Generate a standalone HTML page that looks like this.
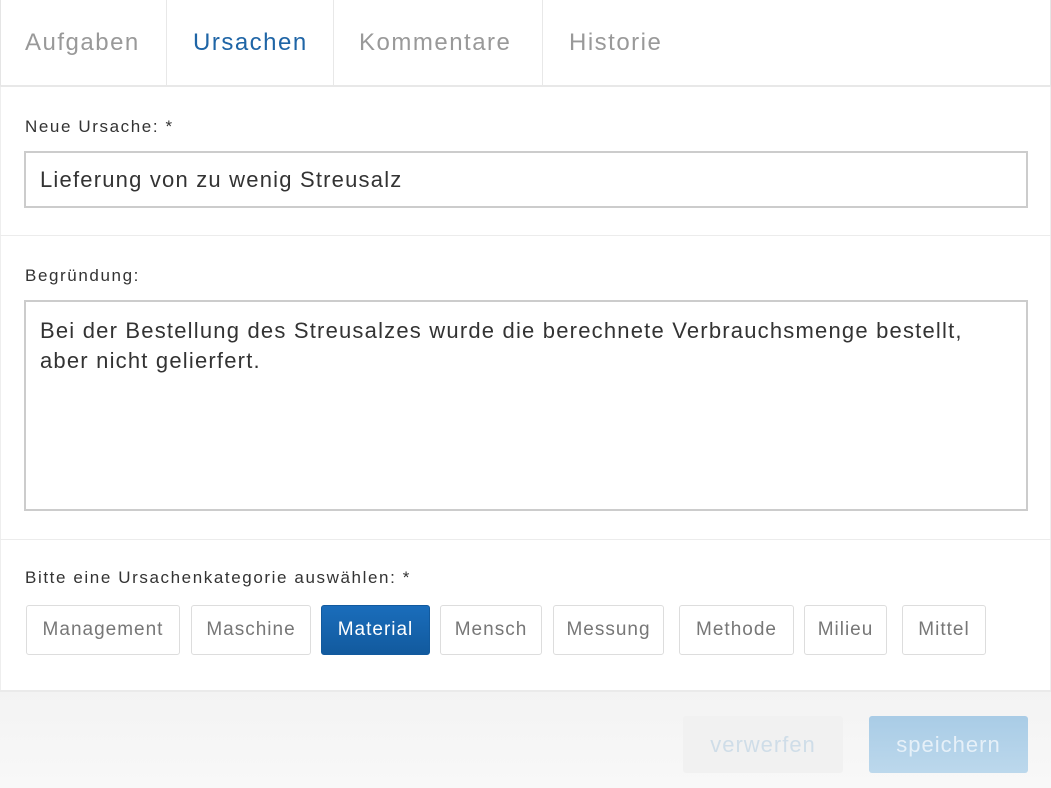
<!DOCTYPE html>
<html><head><meta charset="utf-8"><style>
*{box-sizing:border-box;margin:0;padding:0}
body{width:1051px;height:788px;overflow:hidden;background:#fff;font-family:"Liberation Sans",sans-serif;position:relative;color:#333}
.tabs{position:absolute;left:0;top:0;width:1051px;height:87px;border-bottom:2px solid #e8e8e8;border-left:1px solid #e5e5e5;border-right:1px solid #e5e5e5}
.tab{position:absolute;top:0;height:86px;line-height:86px;font-size:24px;letter-spacing:1.5px;color:#999}
.sep{position:absolute;top:0;width:1px;height:86px;background:#e8e8e8}
.lbl{position:absolute;left:25px;font-size:17px;letter-spacing:1.6px;color:#333}
.box{position:absolute;left:24px;width:1004px;border:2px solid #ccc;background:#fff;font-size:22px;letter-spacing:1.2px;color:#333;padding-left:14px}
.hr{position:absolute;left:0;width:1051px;height:1px;background:#ececec}
.cat{position:absolute;top:605px;height:50px;line-height:48px;border:1px solid #ddd;border-radius:3px;text-align:center;font-size:19px;letter-spacing:1px;color:#777;background:#fff;white-space:nowrap}
.foot{position:absolute;left:0;top:690px;width:1051px;height:98px;background:linear-gradient(#f3f3f3,#f8f8f8);border-top:2px solid #eaeaea}
.side{position:absolute;top:87px;width:1px;height:603px;background:#eee}
</style></head><body>
<div class="tabs">
<div class="tab" style="left:24px">Aufgaben</div>
<div class="sep" style="left:165px"></div>
<div class="tab" style="left:192px;color:#1f65a6">Ursachen</div>
<div class="sep" style="left:332px"></div>
<div class="tab" style="left:358px">Kommentare</div>
<div class="sep" style="left:541px"></div>
<div class="tab" style="left:568px">Historie</div>
</div>
<div class="side" style="left:0"></div><div class="side" style="left:1050px"></div>
<div class="lbl" style="top:117px">Neue Ursache: *</div>
<div class="box" style="top:151px;height:57px;line-height:53px">Lieferung von zu wenig Streusalz</div>
<div class="hr" style="top:235px"></div>
<div class="lbl" style="top:266px">Begründung:</div>
<div class="box" style="top:300px;height:211px;padding-top:14px;line-height:30px">Bei der Bestellung des Streusalzes wurde die berechnete Verbrauchsmenge bestellt,<br>aber nicht gelierfert.</div>
<div class="hr" style="top:539px"></div>
<div class="lbl" style="top:568px">Bitte eine Ursachenkategorie auswählen: *</div>
<div class="cat" style="left:26px;width:154px">Management</div>
<div class="cat" style="left:191px;width:120px">Maschine</div>
<div class="cat" style="left:321px;width:109px;background:linear-gradient(#1a6dbb,#125a9e);color:#fff;border-color:#125a9e">Material</div>
<div class="cat" style="left:440px;width:102px">Mensch</div>
<div class="cat" style="left:553px;width:111px">Messung</div>
<div class="cat" style="left:679px;width:115px">Methode</div>
<div class="cat" style="left:804px;width:83px">Milieu</div>
<div class="cat" style="left:902px;width:84px">Mittel</div>
<div class="foot"></div>
<div style="position:absolute;left:683px;top:716px;width:160px;height:57px;line-height:57px;text-align:center;font-size:22px;letter-spacing:1px;color:#cfdde8;background:#f1f1f1;border-radius:3px">verwerfen</div>
<div style="position:absolute;left:869px;top:716px;width:159px;height:57px;line-height:57px;text-align:center;font-size:22px;letter-spacing:1px;color:#e6f0f8;background:linear-gradient(#a9cce6,#bcd8ec);border-radius:3px">speichern</div>
</body></html>
